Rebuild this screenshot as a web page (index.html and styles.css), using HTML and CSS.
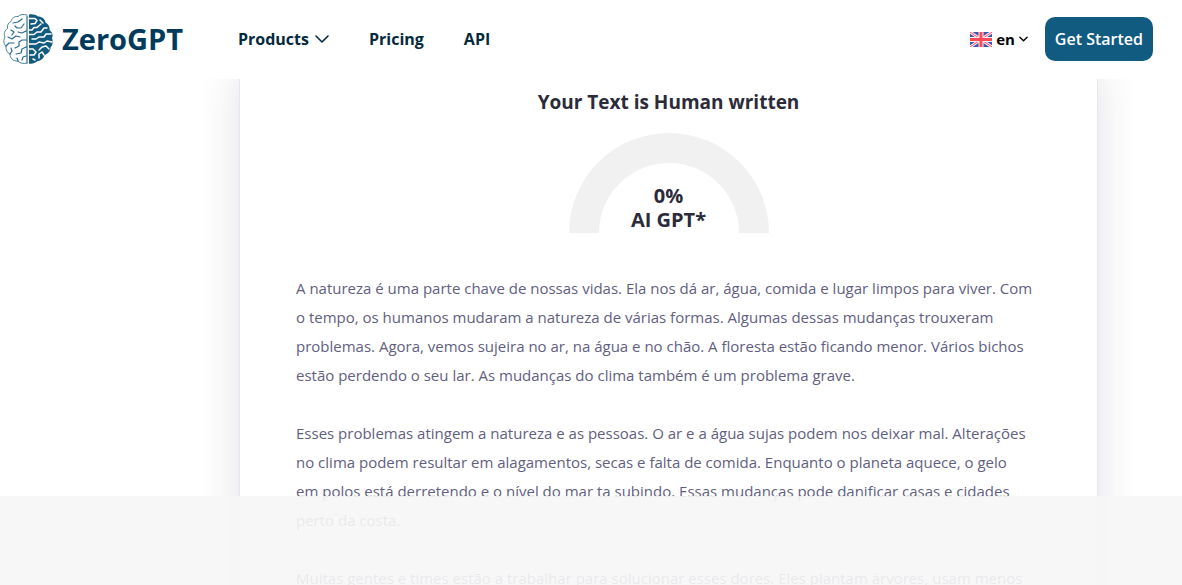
FILE: index.html
```html
<!DOCTYPE html>
<html lang="en">
<head>
    <meta charset="UTF-8">
    <meta name="viewport" content="width=device-width, initial-scale=1.0">
    <title>ZeroGPT</title>
    <link rel="stylesheet" href="styles.css">
</head>
<body>
    <header class="header">
        <a href="#" class="logo">
            <svg class="logo-icon" viewBox="0 0 50 50" fill="none" stroke-linecap="round" stroke-linejoin="round" aria-hidden="true">
                <!-- left half, outlined -->
                <path stroke="#4a82a0" stroke-width="1" d="M24 1C20 0 17 .5 15 2.500C12 2 9 4 8 7.500C5.500 8.500 4 11 4.500 14.500C1.500 16.500 .5 20 2 23C.2 26 .5 30 3 32C2.500 36 4.500 39 7 40C7 44 10 47.500 15 47C17 49.500 21 50 24 49"/>
                <path stroke="#2c6a8c" stroke-width="1.200" d="M24 2V49M19 5L15 8L10 9M21 10L18 14H14L12 12M8 16L11 18L9 21M23 17L19 19L15 18M5 23L9 25L13 22L17 23M3 32L6 29L11 29M23 26H19L16 28V32L12 34M7 40L9 37L8 34M23 33L19 35L18 39L13 40M15 47L14 44M23 42L20 43L19 46"/>
                <!-- right half, filled -->
                <path fill="#125b80" d="M26 .5C30 0 33 1 35 2.500C39 2.500 42 5 42.500 8.500C45.500 10 47 13 46.500 16C49 18 50.500 21 49 24C50.500 28 49.500 31 47.500 33.500C47.500 37 45 40 41.500 41C40.500 44.500 38 47 34.500 47C32 49.500 29 50 26 49.500Z"/>
                <path stroke="#fff" stroke-width="1.500" d="M26 4.500H32L34 6.500L32 9.500L28 10M26 16H29L31 13.500H34L38 10M37 6L40 9M26 20.500H31L34 18H38L41 14H44M48 20H43L41 23H36L33 25H29M49 28L44 27L41 29L36 28L33 30H26M46 35L43 32L39 33L36 36M26 35H30L33 38L31 41H27M41 41L39 38L36 40V44M32 46L30 45"/>
            </svg>
            <span class="logo-text">ZeroGPT</span>
        </a>

        <nav class="nav">
            <button type="button" class="nav-item">
                Products
                <svg class="nav-arrow" viewBox="0 0 14 8" fill="none" stroke="currentColor" stroke-width="1.6" stroke-linecap="round" stroke-linejoin="round" aria-hidden="true"><path d="M1 1l6 6 6-6"/></svg>
            </button>
            <a href="#" class="nav-item">Pricing</a>
            <a href="#" class="nav-item">API</a>
        </nav>

        <div class="header-right">
            <button type="button" class="lang">
                <svg class="flag" viewBox="0 0 22 15" aria-hidden="true">
                    <rect width="22" height="15" rx="1" fill="#4355a5"/>
                    <path d="M0 0L22 15M22 0L0 15" stroke="#f3e8f2" stroke-width="3"/>
                    <path d="M0 0L22 15M22 0L0 15" stroke="#fb5364" stroke-width="1"/>
                    <path d="M11 0V15M0 7.500H22" stroke="#f7edf3" stroke-width="5"/>
                    <path d="M11 0V15M0 7.500H22" stroke="#ff4b58" stroke-width="3"/>
                </svg>
                en
                <svg class="lang-arrow" viewBox="0 0 10 6" fill="none" stroke="currentColor" stroke-width="1.5" stroke-linecap="round" aria-hidden="true"><path d="M1 1l4 4 4-4"/></svg>
            </button>
            <button type="button" class="btn">Get Started</button>
        </div>
    </header>

    <main class="content">
        <section class="card">
            <h1 class="result-title">Your Text is Human written</h1>

            <div class="gauge">
                <div class="gauge-label">
                    <p>0%</p>
                    <p>AI GPT*</p>
                </div>
            </div>

            <div class="text">
                <p>A natureza é uma parte chave de nossas vidas. Ela nos dá ar, água, comida e lugar limpos para viver. Com<br>
                o tempo, os humanos mudaram a natureza de várias formas. Algumas dessas mudanças trouxeram<br>
                problemas. Agora, vemos sujeira no ar, na água e no chão. A floresta estão ficando menor. Vários bichos<br>
                estão perdendo o seu lar. As mudanças do clima também é um problema grave.</p>
                <p>Esses problemas atingem a natureza e as pessoas. O ar e a água sujas podem nos deixar mal. Alterações<br>
                no clima podem resultar em alagamentos, secas e falta de comida. Enquanto o planeta aquece, o gelo<br>
                em polos está derretendo e o nível do mar ta subindo. Essas mudanças pode danificar casas e cidades<br>
                perto da costa.</p>
                <p>Muitas gentes e times estão a trabalhar para solucionar esses dores. Eles plantam árvores, usam menos</p>
            </div>
        </section>
    </main>

    <div class="bottom-bar"></div>
</body>
</html>
```
FILE: styles.css
```css
* {
    margin: 0;
    padding: 0;
    box-sizing: border-box;
}

body {
    font-family: 'Segoe UI', 'Open Sans', 'Noto Sans', sans-serif;
    background: #fff;
    height: 100vh;
    overflow: hidden;
}

button {
    font-family: inherit;
    background: none;
    border: none;
    cursor: pointer;
}

a {
    color: inherit;
    text-decoration: none;
}

.header {
    position: sticky;
    top: 0;
    z-index: 10;
    display: flex;
    align-items: center;
    height: 79px;
    padding: 0 29px 1px 3px;
    background: #fff;
}

.logo {
    display: flex;
    align-items: center;
    gap: 9px;
    width: 235px;
}

.logo-icon {
    width: 50px;
    height: 50px;
}

.logo-text {
    font-size: 29px;
    line-height: 40px;
    font-weight: 700;
    color: #003a5d;
}

.nav {
    display: flex;
    align-items: center;
    gap: 40px;
}

.nav-item {
    display: flex;
    align-items: center;
    gap: 6px;
    font-size: 16px;
    line-height: 24px;
    font-weight: 700;
    color: #05293d;
}

.nav-arrow {
    width: 14px;
    height: 8px;
}

.header-right {
    display: flex;
    align-items: center;
    gap: 17px;
    margin-left: auto;
}

.lang {
    display: flex;
    align-items: center;
    gap: 4px;
    font-size: 15px;
    font-weight: 700;
    color: #000;
}

.flag {
    width: 22px;
    height: 15px;
}

.lang-arrow {
    width: 9px;
    height: 6px;
}

.btn {
    height: 44px;
    padding: 0 10px;
    border-radius: 10px;
    background: #125b80;
    color: #fff;
    font-size: 16px;
    font-weight: 600;
}

.content {
    padding: 0 84px 0 239px;
}

.card {
    margin-top: -24px;
    padding: 32px 56px;
    background: #fff;
    border: 1px solid #e6e6f0;
    box-shadow: 0 16px 40px rgba(46, 46, 80, 0.14);
}

.result-title {
    font-size: 19px;
    line-height: 28px;
    font-weight: 700;
    text-align: center;
    color: #2b2b3a;
}

.gauge {
    display: flex;
    align-items: flex-end;
    justify-content: center;
    width: 200px;
    height: 100px;
    margin: 17px auto 41px;
    padding-bottom: 1px;
    border: 30px solid #f1f1f1;
    border-bottom: none;
    border-radius: 100px 100px 0 0;
}

.gauge-label {
    font-size: 20px;
    line-height: 24px;
    font-weight: 700;
    text-align: center;
    white-space: nowrap;
    color: #2b2b3a;
}

.text {
    font-size: 15px;
    line-height: 29px;
    color: #5f6080;
}

.text p {
    margin-bottom: 29px;
}

.bottom-bar {
    position: fixed;
    left: 0;
    right: 0;
    bottom: 0;
    z-index: 20;
    height: 89px;
    background: rgba(246, 246, 246, 0.91);
}
```
